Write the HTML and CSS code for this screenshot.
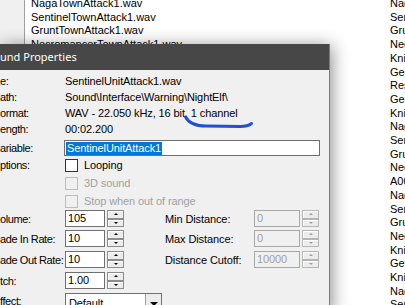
FILE: index.html
```html
<!DOCTYPE html>
<html lang="en">
  <head>
    <meta charset="UTF-8" />
    <title>Sound Properties</title>
    <link rel="stylesheet" href="styles.css">
  </head>
  <body>
    <!-- sound list behind the dialog -->
    <div class="explorer">
      <div class="tree-strip"></div>
      <ul class="file-list">
        <li>NagaTownAttack1.wav</li>
        <li>SentinelTownAttack1.wav</li>
        <li>GruntTownAttack1.wav</li>
        <li>NecromancerTownAttack1.wav</li>
      </ul>
      <ul class="side-list">
        <li>Naga</li>
        <li>Sentinel</li>
        <li>Grunt</li>
        <li>Necro</li>
        <li>Knight</li>
        <li>General</li>
        <li>Rescue</li>
        <li>General</li>
        <li>Knight</li>
        <li>Naga</li>
        <li>Sentinel</li>
        <li>Grunt</li>
        <li>Necro</li>
        <li>A001</li>
        <li>Naga</li>
        <li>Sentinel</li>
        <li>Grunt</li>
        <li>Necro</li>
        <li>Knight</li>
        <li>General</li>
        <li>Knight</li>
        <li>Naga</li>
        <li>Sentinel</li>
      </ul>
    </div>

    <!-- Sound Properties window -->
    <div class="dialog">
      <div class="titlebar">und Properties</div>
      <div class="dialog-body">
        <div class="row info-row"><span class="label">e:</span><span>SentinelUnitAttack1.wav</span></div>
        <div class="row info-row"><span class="label">ath:</span><span>Sound\Interface\Warning\NightElf\</span></div>
        <div class="row info-row"><span class="label">ormat:</span><span>WAV - 22.050 kHz, 16 bit, 1 channel</span></div>
        <div class="row info-row"><span class="label">ength:</span><span>00:02.200</span></div>

        <div class="row variable-row">
          <span class="label">ariable:</span>
          <div class="textbox"><span class="selected">SentinelUnitAttack1</span></div>
        </div>

        <div class="row check-row">
          <span class="label">ptions:</span>
          <span class="box"></span>Looping
        </div>
        <div class="row check-row disabled">
          <span class="label"></span>
          <span class="box"></span>3D sound
        </div>
        <div class="row check-row disabled">
          <span class="label"></span>
          <span class="box"></span>Stop when out of range
        </div>

        <div class="row spin-row">
          <span class="label">olume:</span>
          <div class="spin"><span class="edit">105</span><span class="arrows"><i class="up"></i><i class="down"></i></span></div>
          <span class="label right-label">Min Distance:</span>
          <div class="spin wide disabled"><span class="edit">0</span><span class="arrows"><i class="up"></i><i class="down"></i></span></div>
        </div>
        <div class="row spin-row">
          <span class="label">ade In Rate:</span>
          <div class="spin"><span class="edit">10</span><span class="arrows"><i class="up"></i><i class="down"></i></span></div>
          <span class="label right-label">Max Distance:</span>
          <div class="spin wide disabled"><span class="edit">0</span><span class="arrows"><i class="up"></i><i class="down"></i></span></div>
        </div>
        <div class="row spin-row">
          <span class="label">ade Out Rate:</span>
          <div class="spin"><span class="edit">10</span><span class="arrows"><i class="up"></i><i class="down"></i></span></div>
          <span class="label right-label">Distance Cutoff:</span>
          <div class="spin wide disabled"><span class="edit">10000</span><span class="arrows"><i class="up"></i><i class="down"></i></span></div>
        </div>
        <div class="row spin-row">
          <span class="label">tch:</span>
          <div class="spin"><span class="edit">1.00</span><span class="arrows"><i class="up"></i><i class="down"></i></span></div>
        </div>
        <div class="row spin-row effect-row">
          <span class="label">ffect:</span>
          <div class="combo"><span class="combo-text">Default</span><span class="combo-btn"></span></div>
        </div>
      </div>
    </div>

    <!-- blue pen mark under "1 channel" -->
    <svg class="scribble" width="405" height="305" viewBox="0 0 405 305">
      <path d="M185.5 117 C 189 123.5, 195 126, 206 126 L 240 126.5 C 246 126.5, 249 125.5, 251.5 123.5" fill="none" stroke="#1f4fd6" stroke-width="3" stroke-linecap="round" />
    </svg>
  </body>
</html>
```

FILE: styles.css
```css
body {
  margin: 0;
  width: 405px;
  height: 305px;
  overflow: hidden;
  position: relative;
  background: #fff;
  font-family: "Liberation Sans", Arial, sans-serif;
  font-size: 11px;
  color: #000;
}

/* list in the background */
.explorer {
  display: flex;
  height: 305px;
}
.tree-strip {
  width: 24px;
  background: #f0f0f0;
  border-right: 1px solid #a0a0a0;
}
.file-list,
.side-list {
  list-style: none;
  margin: -3px 0 0;
  padding: 0;
  line-height: 13.7px;
  white-space: nowrap;
  overflow: hidden;
}
.file-list {
  width: 359px;
  padding-left: 6px;
}
.side-list {
  flex: 1;
}

/* dialog window */
.dialog {
  position: absolute;
  left: 0;
  top: 44px;
  width: 329px;
  height: 270px;
  background: #f0f0f0;
  border-right: 1px solid #7d7d7d;
  box-shadow: 2px 2px 16px rgba(0, 0, 0, 0.45);
}
.titlebar {
  height: 26px;
  line-height: 26px;
  background: #474747;
  color: #fff;
  font-family: "Noto Sans", sans-serif;
  font-size: 11px;
  white-space: nowrap;
}
.dialog-body {
  padding-top: 3px;
  letter-spacing: -0.1px;
}

.row {
  display: flex;
  align-items: center;
  white-space: nowrap;
}
.label {
  width: 65px;
  flex: none;
  letter-spacing: -0.4px;
}
.info-row {
  height: 16px;
}

/* variable text box with selection */
.variable-row {
  margin-top: 3px;
  height: 16px;
}
.textbox {
  box-sizing: border-box;
  width: 256px;
  height: 16px;
  margin-left: -1px;
  padding: 0 1px;
  border: 1px solid #707070;
  background: #fff;
  display: flex;
  align-items: center;
}
.selected {
  display: inline-block;
  line-height: 13px;
  padding: 0 1px;
  background: #0078d7;
  color: #fff;
}

/* checkboxes */
.check-row {
  height: 18px;
}
.box {
  box-sizing: border-box;
  width: 13px;
  height: 13px;
  margin-right: 6px;
  border: 1px solid #333;
  background: #fff;
}
.check-row.disabled {
  color: #a0a0a0;
}
.check-row.disabled .box {
  border-color: #bcbcbc;
  background: #f0f0f0;
}

/* spin controls */
.spin-row {
  height: 17px;
  margin-top: 4px;
}
.check-row + .spin-row {
  margin-top: 0;
}
.check-row + .spin-row + .spin-row {
  margin-top: 3px;
}
.spin {
  display: flex;
  height: 17px;
}
.edit {
  box-sizing: border-box;
  width: 40px;
  height: 17px;
  padding-left: 2px;
  line-height: 15px;
  border: 1px solid #707070;
  background: #fff;
}
.spin.wide .edit {
  width: 46px;
}
.arrows {
  display: flex;
  flex-direction: column;
  width: 17px;
  margin-left: 2px;
}
.arrows i {
  flex: 1;
  display: flex;
  align-items: center;
  justify-content: center;
  box-sizing: border-box;
  border: 1px solid #8c8c8c;
  background: #ececec;
  box-shadow: inset 1px 1px #fff;
}
.arrows i::after {
  content: "";
  border-left: 2px solid transparent;
  border-right: 2px solid transparent;
}
.arrows .up::after {
  border-bottom: 2px solid #000;
}
.arrows .down::after {
  border-top: 2px solid #000;
}
.right-label {
  width: 89px;
  margin-left: 41px;
  letter-spacing: -0.1px;
}
.spin.disabled .edit {
  border-color: #a8a8a8;
  background: #f0f0f0;
  color: #a0a0a0;
}
.spin.disabled .arrows i {
  border-color: #b4b4b4;
}
.spin.disabled .arrows .up::after {
  border-bottom-color: #a0a0a0;
}
.spin.disabled .arrows .down::after {
  border-top-color: #a0a0a0;
}

/* effect combo box */
.effect-row {
  height: 21px;
  align-items: flex-start;
}
.effect-row .label {
  line-height: 17px;
}
.combo {
  box-sizing: border-box;
  display: flex;
  width: 97px;
  height: 21px;
  border: 1px solid #707070;
  background: #fff;
}
.combo-text {
  flex: 1;
  padding-left: 3px;
  line-height: 18px;
}
.combo-btn {
  width: 15px;
  display: flex;
  align-items: center;
  justify-content: center;
  background: #ececec;
  border-left: 1px solid #a0a0a0;
}
.combo-btn::after {
  content: "";
  border-left: 4px solid transparent;
  border-right: 4px solid transparent;
  border-top: 4px solid #000;
}

/* pen mark on top of everything */
.scribble {
  position: absolute;
  top: 0;
  left: 0;
  pointer-events: none;
}
```
